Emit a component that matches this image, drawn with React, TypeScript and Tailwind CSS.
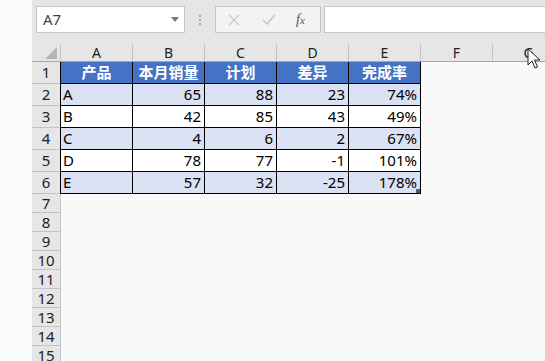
import React from "react";

const cols = ["A", "B", "C", "D", "E", "F", "G"];
const header = ["产品", "本月销量", "计划", "差异", "完成率"];
const data: (string | number)[][] = [
  ["A", 65, 88, 23, "74%"],
  ["B", 42, 85, 43, "49%"],
  ["C", 4, 6, 2, "67%"],
  ["D", 78, 77, -1, "101%"],
  ["E", 57, 32, -25, "178%"],
];

const font = { fontFamily: '"Noto Sans", "Noto Sans CJK SC", sans-serif' };

function RowHead({ n, h }: { n: number; h: string }) {
  return (
    <div
      className={`w-[29px] shrink-0 ${h} bg-[#e6e6e6] border-r border-b border-[#c3c3c3] flex items-center justify-center text-[15px] text-[#222] leading-none`}
    >
      {n}
    </div>
  );
}

export default function App() {
  return (
    <div
      className="w-[545px] h-[361px] overflow-hidden flex bg-[#f9f9f9] relative select-none"
      style={font}
    >
      <div className="w-[32px] shrink-0 bg-[#fafafa]" />
      <div className="flex-1 flex flex-col min-w-0">
        {/* toolbar */}
        <div className="h-[44px] shrink-0 bg-[#e6e6e6] flex items-start pt-[6px] pl-[4px]">
          <div className="w-[149px] h-[27px] bg-white border border-[#c6c6c6] flex items-center pl-[6px] pr-[5px]">
            <span className="text-[15px] text-[#444] flex-1 leading-none">A7</span>
            <svg width="8" height="5" viewBox="0 0 8 5">
              <path d="M0 0 L8 0 L4 5 Z" fill="#777" />
            </svg>
          </div>
          <div className="w-[30px] h-[27px] flex flex-col items-center justify-center gap-[2px]">
            <div className="w-[2px] h-[2px] bg-[#aaa]" />
            <div className="w-[2px] h-[2px] bg-[#aaa]" />
            <div className="w-[2px] h-[2px] bg-[#aaa]" />
          </div>
          <div className="w-[106px] h-[27px] bg-[#f3f3f3] border border-[#c6c6c6] flex items-center">
            <svg width="12" height="12" viewBox="0 0 12 12" className="ml-[12px]">
              <path d="M1 1 L11 11 M11 1 L1 11" stroke="#c8c8c8" strokeWidth="1.3" />
            </svg>
            <svg width="14" height="12" viewBox="0 0 14 12" className="ml-[22px]">
              <path d="M1 6 L5 10 L13 1" stroke="#c8c8c8" strokeWidth="1.6" fill="none" />
            </svg>
            <span
              className="ml-[20px] text-[14px] text-[#555] italic leading-none"
              style={{ fontFamily: '"Liberation Serif", serif' }}
            >
              f<span className="text-[11px]">x</span>
            </span>
          </div>
          <div className="ml-[3px] flex-1 h-[27px] bg-white border border-[#c6c6c6] border-r-0" />
        </div>
        {/* column header */}
        <div className="h-[18px] shrink-0 flex bg-[#e6e6e6] border-b border-[#a8a8a8]">
          <div className="w-[29px] shrink-0 border-r border-[#c3c3c3] relative">
            <svg width="12" height="12" viewBox="0 0 12 12" className="absolute right-[3px] bottom-[2px]">
              <path d="M12 0 L12 12 L0 12 Z" fill="#b5b5b5" />
            </svg>
          </div>
          {cols.map((c) => (
            <div
              key={c}
              className="w-[72px] shrink-0 border-r border-[#c3c3c3] flex items-center justify-center text-[14px] text-[#222] leading-none"
            >
              {c}
            </div>
          ))}
        </div>
        {/* row 1 */}
        <div className="flex h-[22px] shrink-0">
          <RowHead n={1} h="h-[22px]" />
          {header.map((t, i) => (
            <div
              key={t}
              className={`w-[72px] shrink-0 h-[22px] bg-[#4472c4] border-r border-b border-black ${i === 0 ? "border-l -ml-px w-[73px]" : ""} flex items-center justify-center text-white font-bold text-[15px] leading-none`}
            >
              {t}
            </div>
          ))}
        </div>
        {data.map((row, r) => (
          <div key={r} className="flex h-[22px] shrink-0">
            <RowHead n={r + 2} h="h-[22px]" />
            {row.map((v, i) => (
              <div
                key={i}
                className={`relative w-[72px] shrink-0 h-[22px] ${r % 2 === 0 ? "bg-[#d9e1f2]" : "bg-white"} border-r border-b border-black ${i === 0 ? "border-l -ml-px w-[73px] justify-start pl-[2px]" : "justify-end pr-[3px]"} flex items-center text-[15px] text-black leading-none`}
              >
                {v}
                {r === 4 && i === 4 && (
                  <div className="absolute right-0 bottom-0 w-[4px] h-[4px] bg-[#4a5b8e]" />
                )}
              </div>
            ))}
          </div>
        ))}
        {[7, 8, 9, 10, 11, 12, 13, 14, 15].map((n) => (
          <div key={n} className="flex h-[19px] shrink-0">
            <RowHead n={n} h="h-[19px]" />
          </div>
        ))}
      </div>
      {/* mouse cursor */}
      <svg
        width="14"
        height="22"
        viewBox="0 0 14 22"
        className="absolute left-[527px] top-[48px]"
      >
        <path
          d="M1 1 L1 17 L5 13 L8 20 L10.5 19 L7.5 12 L13 12 Z"
          fill="white"
          stroke="#222"
          strokeWidth="1"
          strokeLinejoin="round"
        />
      </svg>
    </div>
  );
}
